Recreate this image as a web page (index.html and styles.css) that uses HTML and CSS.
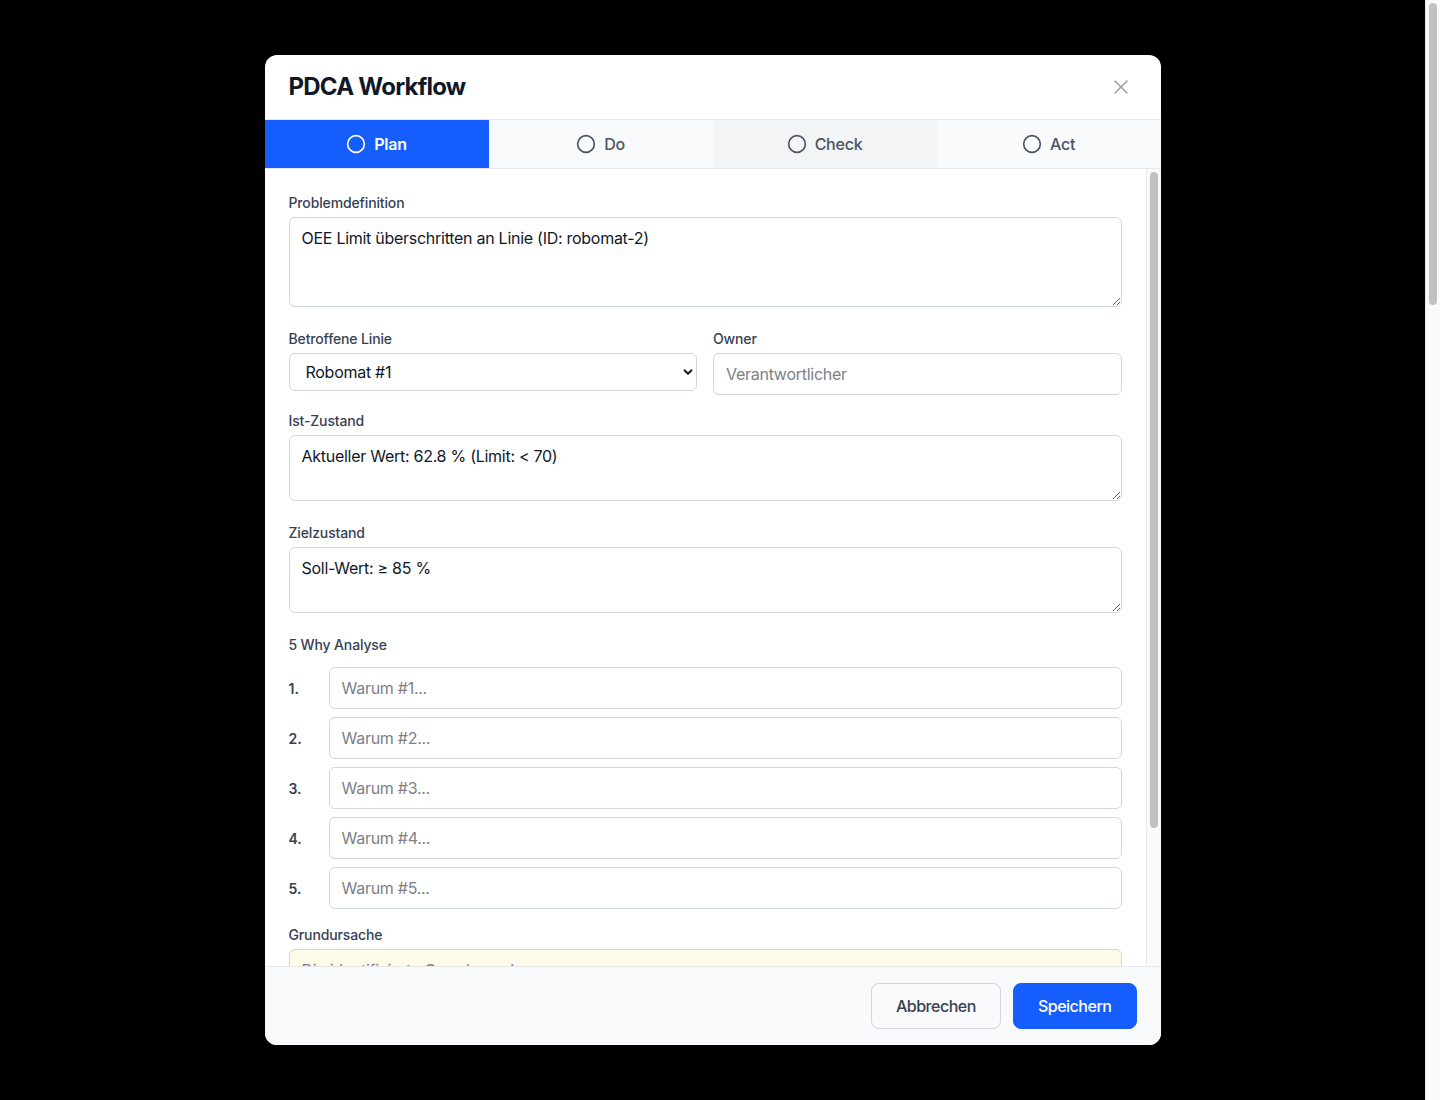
FILE: index.html
```html
<!DOCTYPE html>
<html lang="de">
<head>
    <meta charset="UTF-8">
    <title>PDCA Workflow</title>
    <link rel="stylesheet" href="styles.css">
</head>
<body>
    <div class="backdrop">
        <div class="modal">
            <div class="modal-header">
                <h2 class="modal-title">PDCA Workflow</h2>
                <button class="close-btn" type="button" aria-label="Schließen">
                    <svg width="24" height="24" viewBox="0 0 24 24" fill="none" stroke="currentColor" stroke-width="1.6" stroke-linecap="round" stroke-linejoin="round"><path d="M18 6 6 18"/><path d="m6 6 12 12"/></svg>
                </button>
            </div>

            <div class="tabs">
                <button class="tab tab-active" type="button">
                    <svg width="20" height="20" viewBox="0 0 24 24" fill="none" stroke="currentColor" stroke-width="2"><circle cx="12" cy="12" r="10"/></svg>
                    Plan
                </button>
                <button class="tab" type="button">
                    <svg width="20" height="20" viewBox="0 0 24 24" fill="none" stroke="currentColor" stroke-width="2"><circle cx="12" cy="12" r="10"/></svg>
                    Do
                </button>
                <button class="tab tab-hover" type="button">
                    <svg width="20" height="20" viewBox="0 0 24 24" fill="none" stroke="currentColor" stroke-width="2"><circle cx="12" cy="12" r="10"/></svg>
                    Check
                </button>
                <button class="tab" type="button">
                    <svg width="20" height="20" viewBox="0 0 24 24" fill="none" stroke="currentColor" stroke-width="2"><circle cx="12" cy="12" r="10"/></svg>
                    Act
                </button>
            </div>

            <div class="modal-body">
                <div class="body-scroll">
                    <div class="form">
                        <div class="field">
                            <label class="label">Problemdefinition</label>
                            <textarea class="control" rows="3">OEE Limit überschritten an Linie (ID: robomat-2)</textarea>
                        </div>

                        <div class="field-row">
                            <div class="field">
                                <label class="label">Betroffene Linie</label>
                                <div class="select-wrap">
                                    <select class="control select">
                                        <option>Robomat #1</option>
                                        <option>Robomat #2</option>
                                    </select>
                                    <svg class="select-chevron" width="14" height="14" viewBox="0 0 24 24" fill="none" stroke="currentColor" stroke-width="3.2" stroke-linecap="round" stroke-linejoin="round"><path d="m6 9 6 6 6-6"/></svg>
                                </div>
                            </div>
                            <div class="field">
                                <label class="label">Owner</label>
                                <input class="control" type="text" placeholder="Verantwortlicher">
                            </div>
                        </div>

                        <div class="field">
                            <label class="label">Ist-Zustand</label>
                            <textarea class="control" rows="2">Aktueller Wert: 62.8 % (Limit: &lt; 70)</textarea>
                        </div>

                        <div class="field">
                            <label class="label">Zielzustand</label>
                            <textarea class="control" rows="2">Soll-Wert: ≥ 85 %</textarea>
                        </div>

                        <div class="field">
                            <label class="label">5 Why Analyse</label>
                            <div class="why-list">
                                <div class="why-row"><span class="why-num">1.</span><input class="control" type="text" placeholder="Warum #1..."></div>
                                <div class="why-row"><span class="why-num">2.</span><input class="control" type="text" placeholder="Warum #2..."></div>
                                <div class="why-row"><span class="why-num">3.</span><input class="control" type="text" placeholder="Warum #3..."></div>
                                <div class="why-row"><span class="why-num">4.</span><input class="control" type="text" placeholder="Warum #4..."></div>
                                <div class="why-row"><span class="why-num">5.</span><input class="control" type="text" placeholder="Warum #5..."></div>
                            </div>
                        </div>

                        <div class="field">
                            <label class="label">Grundursache</label>
                            <textarea class="control control-root" rows="5" placeholder="Die identifizierte Grundursache..."></textarea>
                        </div>
                    </div>
                </div>
                <div class="scrollbar">
                    <div class="scrollbar-thumb body-thumb"></div>
                </div>
            </div>

            <div class="modal-footer">
                <button class="btn btn-secondary" type="button">Abbrechen</button>
                <button class="btn btn-primary" type="button">Speichern</button>
            </div>
        </div>
    </div>

    <div class="scrollbar page-scrollbar">
        <div class="scrollbar-thumb page-thumb"></div>
    </div>
</body>
</html>
```

FILE: styles.css
```css
* {
    box-sizing: border-box;
}
html {
    line-height: 1.5;
}
body {
    margin: 0;
    height: 100vh;
    display: flex;
    background: #000;
    font-family: Inter, "Noto Sans", sans-serif;
    color: #101828;
    overflow: hidden;
}

/* fake scrollbars (page + modal body) */
.scrollbar {
    width: 15px;
    flex: none;
    background: #fafafa;
    border-left: 1px solid #e8e8e8;
    padding: 3px 3px 0 3px;
}
.scrollbar-thumb {
    width: 8px;
    border-radius: 4px;
    background: #c1c1c1;
}
.page-thumb {
    height: 302px;
}
.body-thumb {
    height: 656px;
}

.backdrop {
    flex: 1;
    display: flex;
    align-items: center;
    justify-content: center;
}
.modal {
    width: 896px;
    max-height: 90vh;
    background: #fff;
    border-radius: 12px;
    display: flex;
    flex-direction: column;
    overflow: hidden;
}
.modal-header {
    display: flex;
    align-items: center;
    justify-content: space-between;
    padding: 16px 24px;
    border-bottom: 1px solid #e5e7eb;
}
.modal-title {
    margin: 0;
    font-size: 24px;
    line-height: 32px;
    font-weight: 700;
    letter-spacing: -0.032em;
    color: #101828;
}
.close-btn {
    border: 0;
    background: none;
    padding: 4px;
    display: flex;
    color: #99a1af;
    cursor: pointer;
}

/* tabs */
.tabs {
    display: grid;
    grid-template-columns: repeat(4, 1fr);
    border-bottom: 1px solid #e5e7eb;
}
.tab {
    height: 48px;
    border: 0;
    background: #f9fafb;
    color: #4a5565;
    font-family: inherit;
    font-size: 16px;
    font-weight: 500;
    letter-spacing: -0.015em;
    display: flex;
    align-items: center;
    justify-content: center;
    gap: 8px;
    cursor: pointer;
}
.tab-hover {
    background: #f3f4f6;
}
.tab-active {
    background: #155dfc;
    color: #fff;
    font-weight: 600;
}

/* body */
.modal-body {
    flex: 1;
    min-height: 0;
    display: flex;
}
.body-scroll {
    flex: 1;
    overflow: hidden;
    padding: 24px;
}
.form {
    display: flex;
    flex-direction: column;
    gap: 16px;
}
.field-row {
    display: grid;
    grid-template-columns: 1fr 1fr;
    gap: 16px;
    align-items: start;
}
.label {
    display: block;
    font-size: 14px;
    line-height: 20px;
    font-weight: 500;
    letter-spacing: -0.01em;
    color: #364153;
    margin-bottom: 4px;
}
.control {
    display: block;
    width: 100%;
    border: 1px solid #d1d5dc;
    border-radius: 6px;
    background: #fff;
    padding: 8px 12px;
    font-family: inherit;
    font-size: 16px;
    line-height: 24px;
    letter-spacing: -0.017em;
    color: #101828;
}
.control::placeholder {
    color: #7c8088;
}
textarea.control {
    margin-bottom: 6px;
    resize: vertical;
}
.control-root {
    background: #fefce8;
}
.select-wrap {
    position: relative;
}
.select {
    appearance: none;
    height: 38px;
    padding: 6px 32px 6px 16px;
}
.select-chevron {
    position: absolute;
    right: 2px;
    top: 12px;
    color: #101828;
    pointer-events: none;
}
.why-list {
    display: flex;
    flex-direction: column;
    gap: 8px;
    margin-top: 12px;
}
.why-row {
    display: flex;
    align-items: center;
    gap: 8px;
}
.why-num {
    width: 32px;
    flex: none;
    font-size: 14px;
    font-weight: 600;
    color: #364153;
}

/* footer */
.modal-footer {
    display: flex;
    justify-content: flex-end;
    gap: 12px;
    padding: 16px 24px;
    background: #f9fafb;
    border-top: 1px solid #e5e7eb;
}
.btn {
    padding: 10px 24px;
    border-radius: 8px;
    font-family: inherit;
    font-size: 16px;
    line-height: 24px;
    font-weight: 500;
    letter-spacing: -0.03em;
    cursor: pointer;
}
.btn-secondary {
    background: transparent;
    border: 1px solid #d1d5dc;
    color: #364153;
}
.btn-primary {
    background: #155dfc;
    border: 1px solid #155dfc;
    color: #fff;
}
```
